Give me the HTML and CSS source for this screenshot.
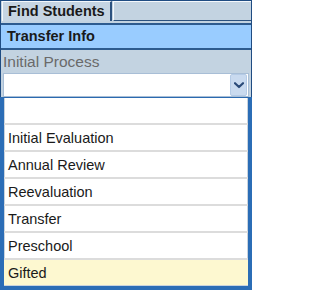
FILE: index.html
```html
<!DOCTYPE html>
<html>
<head>
<meta charset="utf-8">
<link rel="stylesheet" href="styles.css">
</head>
<body>
<div class="panel">
  <div class="upper">
    <div class="tabs">
      <div class="tab active">Find Students</div>
      <div class="tab rest"></div>
    </div>
    <div class="section-head">Transfer Info</div>
    <div class="field-label">Initial Process</div>
    <div class="select">
      <span class="select-value"></span>
      <span class="select-btn">
        <svg width="10" height="7" viewBox="0 0 10 7"><path d="M1 1.2 L5 5 L9 1.2" fill="none" stroke="#2a4a78" stroke-width="2.2" stroke-linecap="round" stroke-linejoin="round"/></svg>
      </span>
    </div>
  </div>
  <ul class="options">
    <li class="option"></li>
    <li class="option">Initial Evaluation</li>
    <li class="option">Annual Review</li>
    <li class="option">Reevaluation</li>
    <li class="option">Transfer</li>
    <li class="option">Preschool</li>
    <li class="option selected">Gifted</li>
  </ul>
</div>
</body>
</html>
```

FILE: styles.css
```css
html, body {
  margin: 0;
  padding: 0;
  background: #ffffff;
}

.panel {
  width: 252px;
  height: 290px;
  font-family: "Liberation Sans", Arial, sans-serif;
  color: #1a1a1a;
  display: flex;
  flex-direction: column;
  overflow: hidden;
}

.upper {
  background: #c3d3e1;
  border-top: 1px solid #1f4c82;
  border-left: 1px solid #1f4c82;
  border-right: 1px solid #1f4c82;
}

.tabs {
  display: flex;
  height: 20px;
}

.tab {
  box-sizing: border-box;
}

.tab.active {
  width: 110px;
  margin-left: 1px;
  background: #c6d5e3;
  border-left: 1px solid #f4f8fc;
  border-top: 1px solid #f4f8fc;
  border-right: 2px solid #2c527f;
  font-weight: bold;
  font-size: 14.5px;
  line-height: 18px;
  padding-left: 5px;
  white-space: nowrap;
}

.tab.rest {
  flex: 1;
  margin-left: 1px;
  border-left: 1px solid #f4f8fc;
  border-top: 1px solid #f4f8fc;
  border-bottom: 1px solid #2c527f;
  background: #c3d3e1;
}

.section-head {
  margin-top: 2px;
  height: 23px;
  border-top: 2px solid #2d5b8f;
  border-bottom: 2px solid #2d5b8f;
  background: #99ccff;
  font-weight: bold;
  font-size: 14.5px;
  line-height: 23px;
  padding-left: 6px;
}

.field-label {
  height: 23px;
  font-size: 15.5px;
  line-height: 24px;
  color: #6a6a6a;
  padding-left: 2px;
}

.select {
  display: flex;
  justify-content: space-between;
  align-items: center;
  box-sizing: border-box;
  height: 24px;
  margin: 0 2px 0 2px;
  background: #ffffff;
  border: 1px solid #a8bed6;
  padding-right: 1px;
}

.select-btn {
  display: flex;
  align-items: center;
  justify-content: center;
  width: 15px;
  height: 20px;
  background: #c9daef;
  border: 1px solid #b5cbe6;
  border-radius: 2px;
}

.options {
  list-style: none;
  margin: 0;
  padding: 0;
  flex: 1;
  background: #ffffff;
  border-top: 1px solid #2b6ab0;
  border-left: 4px solid #2b6db6;
  border-right: 4px solid #2b6db6;
  border-bottom: 4px solid #2b6db6;
  box-shadow: inset 1px 0 0 #c9d3dd, inset -1px 0 0 #c9d3dd, inset 0 -1px 0 #c9d3dd;
}

.option {
  height: 25px;
  border-bottom: 2px solid #dcdcdc;
  font-size: 14.5px;
  line-height: 26px;
  padding-left: 4px;
  color: #1a1a1a;
}

.option.selected {
  border-bottom: none;
  background: #fdf8d0;
}
```
